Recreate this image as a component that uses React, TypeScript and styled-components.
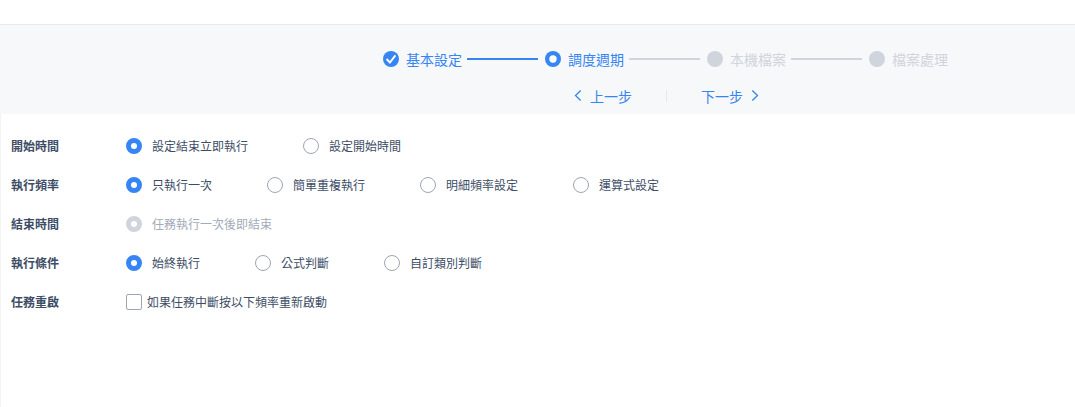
import React from "react";
import styled, { createGlobalStyle, css } from "styled-components";

const blue = "#3685f2";
const muted = "#d0d4dc";
const ink = "#3d4d66";

const GlobalStyle = createGlobalStyle`
  * { box-sizing: border-box; }
  body {
    margin: 0;
    background: #fff;
    color: ${ink};
    font: 12px/24px "Noto Sans CJK TC", "Noto Sans", sans-serif;
  }
`;

const Page = styled.div`
  display: flex;
  flex-direction: column;
  min-height: 100vh;
`;

const TopBar = styled.div`
  height: 25px;
  border-bottom: 1px solid #e6e8ed;
`;

const Header = styled.header`
  display: flex;
  flex-direction: column;
  align-items: center;
  gap: 13px;
  padding: 22px 0 6px 258px;
  background: #f7f8fa;
`;

const Steps = styled.ol`
  display: flex;
  align-items: center;
  margin: 0;
  padding: 0;
  list-style: none;
`;

type State = "done" | "current" | "pending";

const Step = styled.li<{ $state: State }>`
  display: flex;
  align-items: center;
  gap: 5px;
  color: ${(p) => (p.$state === "pending" ? muted : blue)};

  &:not(:last-child)::after {
    content: "";
    width: 71px;
    height: 2px;
    margin: 0 7px 0 -2px;
    background: ${(p) => (p.$state === "done" ? blue : muted)};
  }
`;

const StepIcon = styled.svg`
  display: block;
  width: 16px;
  height: 16px;
`;

const StepLabel = styled.span`
  padding: 0 2px;
  font-size: 14px;
  line-height: 24px;
`;

const StepNav = styled.nav`
  display: flex;
  align-items: center;
  gap: 34px;
`;

const NavButton = styled.button`
  display: flex;
  align-items: center;
  gap: 8px;
  padding: 0;
  border: 0;
  background: none;
  color: ${blue};
  font: inherit;
  font-size: 14px;
  line-height: 24px;
  cursor: pointer;
`;

const Chevron = styled.svg`
  display: block;
  width: 8px;
  height: 12px;
  fill: none;
  stroke: currentColor;
  stroke-width: 1.3;
`;

const Divider = styled.span`
  width: 1px;
  height: 12px;
  background: #e6e8ed;
`;

const Form = styled.form`
  display: flex;
  flex: 1;
  flex-direction: column;
  gap: 15px;
  padding: 20px 10px;
  border-left: 1px solid #f3f4f7;
`;

const Row = styled.div`
  display: flex;
  align-items: center;
`;

const RowLabel = styled.span`
  flex: none;
  width: 115px;
  font-weight: 700;
`;

const Options = styled.div`
  display: flex;
  flex-wrap: wrap;
  column-gap: 55px;
`;

const Option = styled.label<{ $tight?: boolean; $disabled?: boolean }>`
  display: flex;
  align-items: center;
  gap: ${(p) => (p.$tight ? 5 : 10)}px;
  color: ${(p) => (p.$disabled ? "#a3aab8" : ink)};
`;

const control = css`
  appearance: none;
  flex: none;
  width: 16px;
  height: 16px;
  margin: 0;
  border: 1px solid #9ea6b4;
  background: #fff;
`;

const Radio = styled.input`
  ${control}
  border-radius: 50%;

  &:checked { border: 5px solid ${blue}; }
  &:checked:disabled { border-color: ${muted}; }
`;

const Checkbox = styled.input`
  ${control}
  border-radius: 2px;

  &:checked { border-color: ${blue}; background: ${blue}; }
`;

const steps: { label: string; state: State }[] = [
  { label: "基本設定", state: "done" },
  { label: "調度週期", state: "current" },
  { label: "本機檔案", state: "pending" },
  { label: "檔案處理", state: "pending" },
];

const groups = [
  { name: "start", label: "開始時間", options: ["設定結束立即執行", "設定開始時間"] },
  { name: "frequency", label: "執行頻率", options: ["只執行一次", "簡單重複執行", "明細頻率設定", "運算式設定"] },
  { name: "end", label: "結束時間", options: ["任務執行一次後即結束"], disabled: true },
  { name: "condition", label: "執行條件", options: ["始終執行", "公式判斷", "自訂類別判斷"] },
];

export default function App() {
  return (
    <Page>
      <GlobalStyle />
      <TopBar />
      <Header>
        <Steps>
          {steps.map(({ label, state }) => (
            <Step key={label} $state={state} aria-current={state === "current" ? "step" : undefined}>
              <StepIcon viewBox="0 0 16 16" aria-hidden="true">
                <circle cx="8" cy="8" r="8" fill="currentColor" />
                {state === "done" && (
                  <path d="M3.6 8 6.9 11.5 12.4 4.4" fill="none" stroke="#fff" strokeWidth="1.9" />
                )}
                {state === "current" && <circle cx="8" cy="8" r="3.7" fill="#fff" />}
              </StepIcon>
              <StepLabel>{label}</StepLabel>
            </Step>
          ))}
        </Steps>
        <StepNav>
          <NavButton type="button">
            <Chevron viewBox="0 0 8 12" aria-hidden="true">
              <path d="M6.7.5 1.5 5.5l5.2 5" />
            </Chevron>
            上一步
          </NavButton>
          <Divider />
          <NavButton type="button">
            下一步
            <Chevron viewBox="0 0 8 12" aria-hidden="true">
              <path d="M1.3.5l5.2 5-5.2 5" />
            </Chevron>
          </NavButton>
        </StepNav>
      </Header>
      <Form>
        {groups.map(({ name, label, options, disabled }) => (
          <Row key={name} role="radiogroup" aria-labelledby={`${name}-label`}>
            <RowLabel id={`${name}-label`}>{label}</RowLabel>
            <Options>
              {options.map((text, i) => (
                <Option key={text} $disabled={disabled}>
                  <Radio type="radio" name={name} defaultChecked={i === 0} disabled={disabled} />
                  {text}
                </Option>
              ))}
            </Options>
          </Row>
        ))}
        <Row role="group" aria-labelledby="restart-label">
          <RowLabel id="restart-label">任務重啟</RowLabel>
          <Option $tight>
            <Checkbox type="checkbox" name="restart" />
            如果任務中斷按以下頻率重新啟動
          </Option>
        </Row>
      </Form>
    </Page>
  );
}
